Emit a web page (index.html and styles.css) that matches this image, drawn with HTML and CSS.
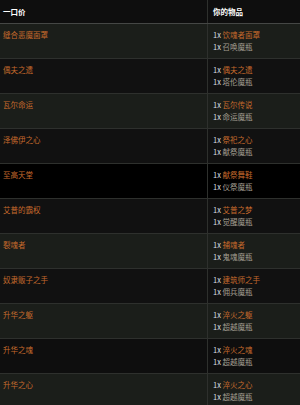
FILE: index.html
```html
<!DOCTYPE html>
<html lang="zh">
<head>
<meta charset="utf-8">
<link rel="stylesheet" href="styles.css">
</head>
<body>
<div class="table">
  <div class="row head">
    <div class="cell left">一口价</div>
    <div class="cell right">你的物品</div>
  </div>
  <div class="row green">
    <div class="cell left name">缝合恶魔面罩</div>
    <div class="cell right"><div><span class="q">1x</span> <span class="name">饮魂者面罩</span></div><div><span class="q">1x</span> <span class="gray">召唤魔瓶</span></div></div>
  </div>
  <div class="row dark">
    <div class="cell left name">偶夫之遗</div>
    <div class="cell right"><div><span class="q">1x</span> <span class="name">偶夫之遗</span></div><div><span class="q">1x</span> <span class="gray">塔伦魔瓶</span></div></div>
  </div>
  <div class="row green">
    <div class="cell left name">瓦尔命运</div>
    <div class="cell right"><div><span class="q">1x</span> <span class="name">瓦尔传说</span></div><div><span class="q">1x</span> <span class="gray">命运魔瓶</span></div></div>
  </div>
  <div class="row dark">
    <div class="cell left name">泽佛伊之心</div>
    <div class="cell right"><div><span class="q">1x</span> <span class="name">祭祀之心</span></div><div><span class="q">1x</span> <span class="gray">献祭魔瓶</span></div></div>
  </div>
  <div class="row black">
    <div class="cell left name">至高天堂</div>
    <div class="cell right"><div><span class="q">1x</span> <span class="name">献祭舞鞋</span></div><div><span class="q">1x</span> <span class="gray">仪祭魔瓶</span></div></div>
  </div>
  <div class="row dark">
    <div class="cell left name">艾普的霸权</div>
    <div class="cell right"><div><span class="q">1x</span> <span class="name">艾普之梦</span></div><div><span class="q">1x</span> <span class="gray">觉醒魔瓶</span></div></div>
  </div>
  <div class="row green">
    <div class="cell left name">裂魂者</div>
    <div class="cell right"><div><span class="q">1x</span> <span class="name">捕魂者</span></div><div><span class="q">1x</span> <span class="gray">鬼魂魔瓶</span></div></div>
  </div>
  <div class="row dark">
    <div class="cell left name">奴隶贩子之手</div>
    <div class="cell right"><div><span class="q">1x</span> <span class="name">建筑师之手</span></div><div><span class="q">1x</span> <span class="gray">佣兵魔瓶</span></div></div>
  </div>
  <div class="row green">
    <div class="cell left name">升华之躯</div>
    <div class="cell right"><div><span class="q">1x</span> <span class="name">淬火之躯</span></div><div><span class="q">1x</span> <span class="gray">超越魔瓶</span></div></div>
  </div>
  <div class="row dark2">
    <div class="cell left name">升华之魂</div>
    <div class="cell right"><div><span class="q">1x</span> <span class="name">淬火之魂</span></div><div><span class="q">1x</span> <span class="gray">超越魔瓶</span></div></div>
  </div>
  <div class="row green">
    <div class="cell left name">升华之心</div>
    <div class="cell right"><div><span class="q">1x</span> <span class="name">淬火之心</span></div><div><span class="q">1x</span> <span class="gray">超越魔瓶</span></div></div>
  </div>
</div>
</body>
</html>
```
FILE: styles.css
```css
html, body {
  margin: 0;
  padding: 0;
  background: #0e0e0e;
}
body {
  width: 300px;
  height: 405px;
  overflow: hidden;
  font-family: "Noto Sans CJK SC", "Noto Sans", sans-serif;
  font-size: 7.5px;
  line-height: 12px;
}
.table {
  display: flex;
  flex-direction: column;
}
.row {
  display: grid;
  grid-template-columns: 208px 1fr;
  height: 34px;
  border-bottom: 1px solid #2e302d;
}
.row.head {
  height: 23px;
  background: #0e0e0e;
  border-bottom: 1px solid #454745;
  color: #ffffff;
  font-weight: bold;
}
.row.head .cell {
  display: flex;
  align-items: center;
  padding-top: 0;
}
.cell {
  padding-top: 5px;
  box-sizing: border-box;
}
.cell.left {
  padding-left: 3px;
  border-right: 1px solid #2e302d;
}
.cell.right {
  padding-left: 5px;
}
.green { background: #1b1e1a; }
.dark { background: #111111; }
.dark2 { background: #0e0e0e; }
.black { background: #000000; }
.name { color: #c4692c; }
.gray { color: #a39f92; }
.q { color: #d6dde3; }
```
